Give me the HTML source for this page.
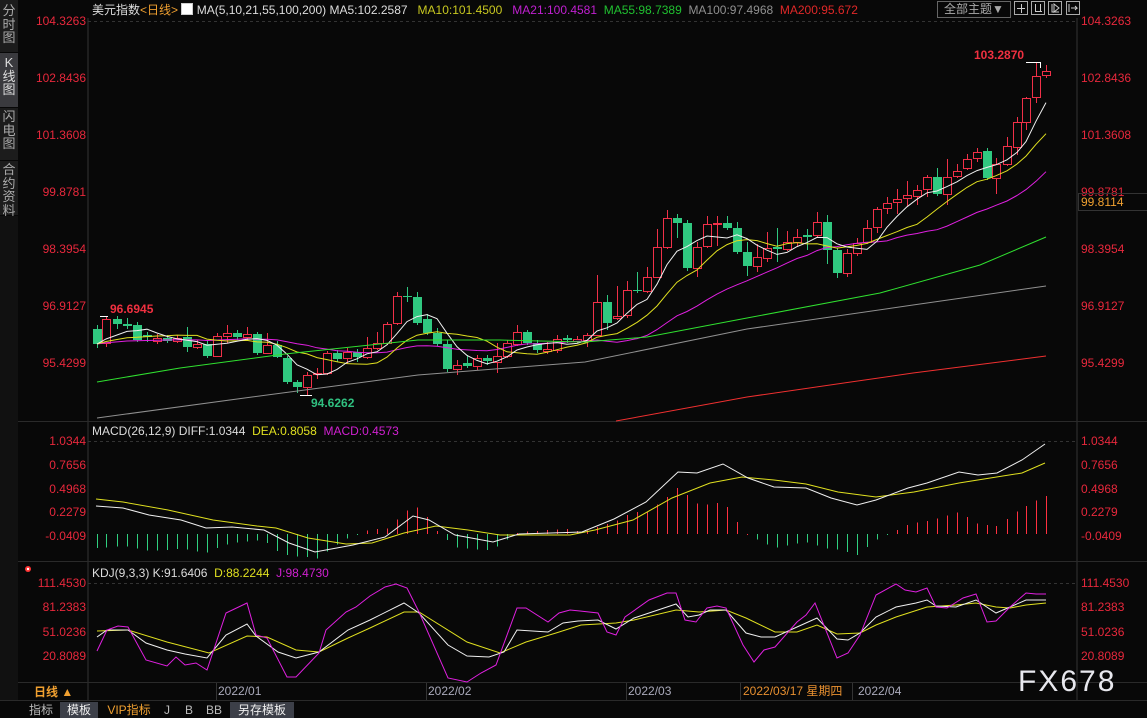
<!DOCTYPE html>
<html><head><meta charset="utf-8"><style>
body{margin:0;background:#080808;width:1147px;height:718px;overflow:hidden;position:relative;font-family:"Liberation Sans","Noto Sans CJK SC",sans-serif}
.t{position:absolute;white-space:nowrap;font-size:12px;line-height:14px}
.ax{position:absolute;font-size:12px;color:#e8283c;line-height:14px}
.sb{position:absolute;left:0;width:18px;color:#aaa;font-size:13px;line-height:13.5px;text-align:center;background:#1c1c1c}
.tab{position:absolute;top:702px;height:16px;font-size:12px;line-height:16px;color:#bbb;text-align:center}
</style></head><body>
<svg id="s" width="1147" height="718" style="position:absolute;left:0;top:0"></svg>
<div class="sb" style="top:0;height:52px;padding-top:4px;box-sizing:border-box">分<br>时<br>图</div>
<div class="sb" style="top:53px;height:54px;background:#3a3a3e;color:#ddd;padding-top:3px;box-sizing:border-box">K<br>线<br>图</div>
<div class="sb" style="top:108px;height:52px;padding-top:2px;box-sizing:border-box">闪<br>电<br>图</div>
<div class="sb" style="top:161px;height:54px;padding-top:2px;box-sizing:border-box">合<br>约<br>资<br>料</div>
<div class="sb" style="top:216px;height:484px;background:#111"></div>
<div class="t" style="left:92px;top:3px;color:#ddd">美元指数<span style="color:#f0a030">&lt;日线&gt;</span> <span style="display:inline-block;width:10px;height:10px;border:1px solid #ccc;background:#fff;vertical-align:-1px"></span> MA(5,10,21,55,100,200) MA5:102.2587 &nbsp; <span style="color:#c8c820">MA10:101.4500</span> &nbsp; <span style="color:#c020d0">MA21:100.4581</span> &nbsp;<span style="color:#20c030">MA55:98.7389</span> &nbsp;<span style="color:#909090">MA100:97.4968</span> &nbsp;<span style="color:#e02828">MA200:95.672</span></div>
<div class="t" style="left:937px;top:1px;width:72px;height:15px;border:1px solid #666;color:#aaa;text-align:center">全部主题▼</div>
<div class="t" style="left:92px;top:424px;color:#ddd">MACD(26,12,9) DIFF:1.0344 &nbsp;<span style="color:#e0e020">DEA:0.8058</span> &nbsp;<span style="color:#d020d0">MACD:0.4573</span></div>
<div class="t" style="left:92px;top:566px;color:#ddd">KDJ(9,3,3) K:91.6406 &nbsp;<span style="color:#e0e020">D:88.2244</span> &nbsp;<span style="color:#d020d0">J:98.4730</span></div>
<div class="t" style="left:974px;top:48px;color:#f03040;font-weight:bold">103.2870</div>
<div class="t" style="left:110px;top:302px;color:#f03040;font-weight:bold">96.6945</div>
<div class="t" style="left:311px;top:396px;color:#30c080;font-weight:bold">94.6262</div>
<div id="ax"></div>
<div class="t" style="left:1078px;top:193px;width:66px;height:16px;border:1px solid #333;color:#f0a030;line-height:16px;padding-left:2px">99.8114</div>
<div class="t" style="left:34px;top:685px;color:#f0a030;font-weight:bold">日线 ▲</div>
<div class="t" style="left:218px;top:684px;color:#aab">2022/01</div>
<div class="t" style="left:428px;top:684px;color:#aab">2022/02</div>
<div class="t" style="left:628px;top:684px;color:#aab">2022/03</div>
<div class="t" style="left:743px;top:684px;color:#e89030">2022/03/17 星期四</div>
<div class="t" style="left:858px;top:684px;color:#aab">2022/04</div>
<div class="t" style="left:1018px;top:666px;color:#e8e8ee;font-size:30px;line-height:32px;letter-spacing:2px">FX678</div>
<div class="tab" style="left:26px;width:30px">指标</div>
<div class="tab" style="left:60px;width:38px;background:#3c3f48;color:#eee">模板</div>
<div class="tab" style="left:104px;width:50px;color:#f0a030">VIP指标</div>
<div class="tab" style="left:160px;width:14px">J</div>
<div class="tab" style="left:182px;width:14px">B</div>
<div class="tab" style="left:204px;width:20px">BB</div>
<div class="tab" style="left:230px;width:64px;background:#3c3f48;color:#eee">另存模板</div>
<script>
var S='';
function L(x1,y1,x2,y2,c,w,d){S+='<line shape-rendering="crispEdges" x1="'+x1+'" y1="'+y1+'" x2="'+x2+'" y2="'+y2+'" stroke="'+c+'" stroke-width="'+(w||1)+'"'+(d?' stroke-dasharray="'+d+'"':'')+'/>';}
function P(a,c){var p=[];for(var i=0;i<a.length;i+=2)p.push(a[i]+','+a[i+1]);S+='<polyline points="'+p.join(' ')+'" fill="none" stroke="'+c+'" stroke-width="1"/>';}
L(88,18,88,700,'#333');L(1077,18,1077,700,'#333');
L(18,421.5,1147,421.5,'#2a2a2a');L(18,561.5,1147,561.5,'#2a2a2a');L(18,682.5,1147,682.5,'#2a2a2a');L(0,700.5,1147,700.5,'#2a2a2a');
L(88,21.5,1077,21.5,'#333',1,'3,3');L(88,441.5,1077,441.5,'#333',1,'3,3');L(88,583.5,1077,583.5,'#333',1,'3,3');
[216,426,626,740,852].forEach(function(x){L(x+.5,683,x+.5,700,'#333');});
var C=[[97,329,344,0,325,348],[106,319,343,1,316,347],[117,319,324,0,316,329],[127,324,326,0,318,329],[137,325,340,0,322,342],[147,335,337,0,332,342],[157,338,341,1,334,344],[167,338,341,0,335,343],[177,338,341,1,335,343],[187,337,347,0,327,352],[197,344,347,1,340,349],[207,344,356,0,340,358],[217,336,356,1,333,357],[227,333,336,1,325,343],[237,333,337,0,330,340],[247,334,337,1,327,341],[257,334,353,0,332,355],[267,345,353,1,333,354],[277,345,357,0,341,358],[287,358,382,0,356,384],[297,382,387,0,380,393],[307,375,387,1,372,395],[317,373,374,1,368,379],[327,353,373,1,351,375],[337,353,359,0,350,362],[347,352,358,1,348,364],[357,352,357,0,349,362],[367,348,357,1,337,359],[377,343,348,1,332,350],[387,324,343,1,322,345],[397,296,323,1,292,325],[407,296,297,0,287,302],[417,297,323,0,292,325],[427,319,333,0,314,335],[437,333,344,0,328,346],[447,344,369,0,340,372],[457,365,369,1,360,375],[467,363,366,0,355,368],[477,358,366,1,355,370],[487,358,361,0,355,365],[497,356,362,1,343,373],[507,343,356,1,340,358],[517,332,344,1,325,346],[527,332,343,0,330,345],[537,343,350,0,340,353],[547,349,351,1,342,354],[557,339,350,1,335,353],[567,338,340,0,335,343],[577,339,341,1,336,343],[587,335,340,1,333,347],[597,302,335,1,275,336],[607,302,323,0,295,330],[617,316,318,1,286,320],[627,290,315,1,281,318],[637,290,291,0,272,293],[647,277,291,1,267,293],[657,247,277,1,229,278],[667,218,247,1,210,249],[677,218,223,0,214,238],[687,223,268,0,220,271],[697,247,268,1,242,277],[707,224,246,1,216,248],[717,223,224,1,216,246],[727,223,228,0,216,230],[737,228,252,0,222,254],[747,252,266,0,242,276],[757,257,266,1,244,272],[767,248,258,1,232,262],[777,247,249,0,228,262],[787,242,249,1,231,251],[797,237,242,1,229,246],[807,235,237,0,229,250],[817,222,235,1,212,238],[827,222,250,0,215,264],[837,250,273,0,248,278],[847,253,273,1,249,277],[857,243,253,1,238,256],[867,228,242,1,220,244],[877,209,227,1,207,233],[887,203,208,1,197,214],[897,199,202,1,189,214],[907,195,198,1,181,206],[917,190,196,1,185,205],[927,177,189,1,175,197],[937,177,194,0,168,196],[947,177,194,1,159,205],[957,171,176,1,164,178],[967,159,168,1,154,170],[977,152,158,1,148,162],[987,151,178,0,148,180],[996,164,178,1,158,194],[1007,146,164,1,137,166],[1017,122,147,1,117,155],[1026,98,122,1,97,130],[1036,76,97,1,62,103],[1046,71,75,1,65,78]];
var R='#f03048',G='#30c880';
C.forEach(function(c){var col=c[3]?R:G;L(c[0]+.5,c[4],c[0]+.5,c[5],col);
 var h=Math.max(1,c[2]-c[1]);
 if(c[3])S+='<rect shape-rendering="crispEdges" x="'+(c[0]-3.5)+'" y="'+(c[1]+.5)+'" width="8" height="'+h+'" fill="#080808" stroke="'+R+'"/>';
 else S+='<rect shape-rendering="crispEdges" x="'+(c[0]-4)+'" y="'+c[1]+'" width="9" height="'+h+'" fill="'+G+'"/>';});
function ma(n){var pts=[];for(var i=0;i<C.length;i++){var s=0;for(var k=0;k<n;k++){var j=Math.max(0,i-k);var c=C[j];s+=c[3]?c[1]:c[2];}pts.push(C[i][0],(s/n).toFixed(1));}return pts;}
P(ma(21),'#e020e0');P(ma(10),'#e0e020');P(ma(5),'#f0f0f0');
P([97,382,180,368,285,354,418,340,500,340,585,342,647,337,747,318,880,293,980,265,1046,237],'#30e030');
P([97,418,252,397,418,375,585,362,747,329,913,305,1046,286],'#909090');
P([616,421,747,397,913,373,1046,356],'#f03030');
L(1026,62.5,1040,62.5,'#fff');L(1040.5,62,1040.5,68,'#fff');L(100,316.5,108,316.5,'#fff');
L(300,395.5,312,395.5,'#fff');
var D=[96,506,123,508,149,515,181,520,206,528,232,527,264,530,289,543,315,552,353,545,385,537,413,516,429,520,455,535,493,542,519,534,582,532,614,519,646,502,678,472,697,473,723,464,748,478,774,487,806,488,831,498,857,505,876,500,908,488,927,483,959,472,978,475,997,473,1022,460,1045,444];
var E=[96,499,123,502,168,510,213,520,257,526,276,528,308,538,346,544,372,543,404,533,436,526,468,530,500,535,570,535,595,530,633,520,672,498,710,483,742,477,774,480,806,484,838,492,876,497,914,492,959,483,984,479,1022,473,1045,463];
function interp(a,x){for(var i=0;i<a.length-2;i+=2){if(x>=a[i]&&x<=a[i+2]){var t=(x-a[i])/(a[i+2]-a[i]);return a[i+1]+t*(a[i+3]-a[i+1]);}}return a[a.length-1];}
var z=534;
C.forEach(function(c){var v=(interp(E,c[0])-interp(D,c[0]))*2;S+='<rect shape-rendering="crispEdges" x="'+c[0]+'" y="'+Math.min(z,z-v)+'" width="1" height="'+Math.max(1,Math.abs(v))+'" fill="'+(v>0?'#ff3040':'#30d080')+'"/>';});
P(E,'#e0e020');P(D,'#f0f0f0');
P([97,631,128,630,167,642,209,653,247,636,267,637,296,650,319,652,348,638,370,628,404,612,419,612,467,642,500,653,526,642,556,633,581,625,616,623,634,620,676,610,699,612,726,610,746,618,775,632,797,632,817,625,837,634,860,633,876,625,896,617,927,607,956,605,976,603,996,607,1010,608,1026,605,1046,603],'#e0e020');
P([97,637,107,630,128,630,146,643,167,650,185,654,207,658,226,635,247,624,256,636,278,652,296,658,319,652,348,630,370,620,404,603,419,613,448,645,467,656,489,657,504,652,517,630,548,632,563,623,578,621,598,620,616,629,634,618,652,612,676,604,688,617,699,615,710,610,726,610,746,633,761,637,775,637,797,627,817,618,837,639,848,640,860,633,876,617,896,607,916,603,927,600,936,606,956,607,976,600,996,613,1010,607,1026,600,1046,600],'#f0f0f0');
P([97,651,107,630,118,626,128,627,146,660,167,666,176,657,185,665,196,663,207,670,226,613,247,603,256,635,267,638,287,677,296,677,319,653,326,630,346,612,356,607,370,596,385,587,396,584,407,588,419,612,448,678,467,682,481,673,496,665,517,608,526,608,548,622,559,613,570,610,580,611,598,613,607,632,616,635,625,617,649,600,667,593,676,593,685,620,696,622,707,608,717,606,726,608,743,645,754,662,764,650,775,647,797,622,806,615,815,603,837,658,848,653,860,635,876,595,896,584,905,590,916,592,927,588,936,607,947,608,963,598,976,594,987,622,996,621,1010,607,1026,593,1036,594,1046,594],'#e020e0');
[1014,1031,1048,1066].forEach(function(x){S+='<rect x="'+(x+.5)+'" y="1.5" width="13" height="13" fill="none" stroke="#aaa"/>';});
L(1017,8.5,1025,8.5,'#ccc');L(1021.5,4,1021.5,13,'#ccc');L(1035.5,4,1035.5,12,'#ccc');L(1035,11.5,1042,11.5,'#ccc');L(1040.5,4,1040.5,11,'#ccc');
S+='<path d="M1052 4v8h7M1054 4l5 4-5 4z" fill="none" stroke="#ccc"/><path d="M1069 4v8M1071 8h6l-2-2m2 2l-2 2" fill="none" stroke="#ccc"/>';
S+='<circle cx="28" cy="569" r="3" fill="#f33"/><circle cx="28" cy="569" r="1.2" fill="#fff"/>';
document.getElementById('s').innerHTML=S;
var A='',lp=[[104.3263,21],[102.8436,78],[101.3608,135],[99.8781,192],[98.3954,249],[96.9127,306],[95.4299,363],['1.0344',441],['0.7656',465],['0.4968',489],['0.2279',512],['-0.0409',536],['111.4530',583],['81.2383',607],['51.0236',632],['20.8089',656]];
lp.forEach(function(p){var s=typeof p[0]=='number'?p[0].toFixed(4):p[0];A+='<div class="ax" style="right:'+(1147-86)+'px;top:'+(p[1]-7)+'px">'+s+'</div><div class="ax" style="left:1081px;top:'+(p[1]-7)+'px">'+s+'</div>';});
document.getElementById('ax').innerHTML=A;
</script>
</body></html>
